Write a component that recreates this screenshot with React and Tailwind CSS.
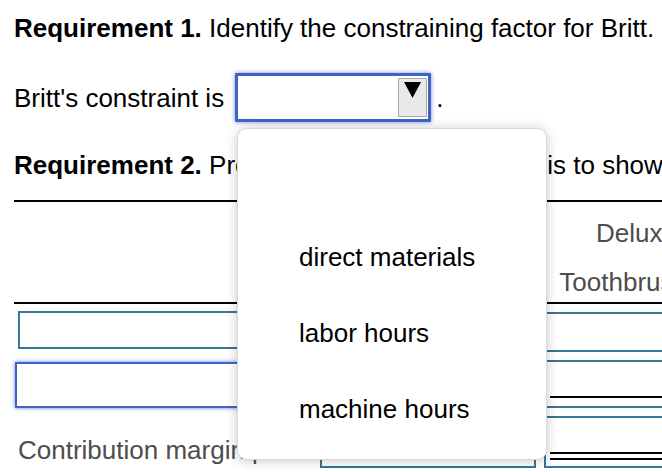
import React from 'react'

const teal = 'border-[#37779a]'

function SelectBox() {
  return (
    <div className="ml-[11px] flex h-[49px] w-[196px] items-center justify-end rounded-[1px] border-[3px] border-[#3f62c6] bg-white pr-[1px] shadow-[0_0_4px_rgba(66,98,210,0.75)]">
      <div className="flex h-[39px] w-[29px] justify-center border border-[#a9a9a9] bg-[#e9e9e9] pt-[3px]">
        <svg width="17" height="16" viewBox="0 0 17 16">
          <polygon points="0,0 17,0 8.5,16" fill="#000" />
        </svg>
      </div>
    </div>
  )
}

function Dropdown() {
  const options = ['', 'direct materials', 'labor hours', 'machine hours']
  return (
    <div className="absolute left-[237px] top-[128px] h-[332px] w-[310px] rounded-[10px] border border-[#d9d9d9] bg-white pt-[14px] shadow-[0_1px_12px_rgba(0,0,0,0.22)]">
      {options.map((o, i) => (
        <div key={i} className="flex h-[76px] items-center pl-[61px] text-[26px] leading-[30px] text-black">
          {o}
        </div>
      ))}
    </div>
  )
}

export default function App() {
  return (
    <div className="relative h-[472px] w-[662px] overflow-hidden bg-white font-['Liberation_Sans',Arial,sans-serif] text-[26px] leading-[30px] text-black">
      <div className="pl-[14px] pt-[13px]">
        {/* Requirement 1 */}
        <p className="whitespace-nowrap">
          <span className="font-bold">Requirement 1.</span> Identify the constraining factor for Britt.
        </p>

        <div className="mt-[30px] flex items-center whitespace-nowrap">
          <span>Britt's constraint is</span>
          <SelectBox />
          <span className="ml-[5px]">.</span>
        </div>

        {/* Requirement 2 */}
        <p className="mt-[28px] whitespace-nowrap">
          <span className="font-bold">Requirement 2.</span> Prepare a product line analysis to show which product to emphasize.
        </p>

        <div className="mt-[20px] w-[700px] border-t-2 border-black" />

        {/* table */}
        <div className="flex w-[700px]">
          {/* labels */}
          <div className="w-[298px] shrink-0">
            <div className="h-[100px]" />
            <div className="border-t-2 border-black pt-[7px]">
              <div className={`ml-[4px] h-[38px] w-[290px] border-2 ${teal}`} />
              <div className="mt-[13px] ml-[1px] h-[46px] w-[293px] border-2 border-[#4063c8] shadow-[0_0_4px_rgba(66,98,210,0.8)]" />
              <p className="mt-[27px] ml-[4px] whitespace-nowrap text-[#4d4d4d]">Contribution margin per machine hour</p>
            </div>
          </div>

          {/* Standard */}
          <div className="w-[231px] shrink-0">
            <div className="flex h-[100px] flex-col items-end pt-[7px] text-[#4d4d4d]">
              <span className="h-[49px] leading-[49px]">Standard</span>
              <span className="h-[44px] leading-[49px]">Toothbrush</span>
            </div>
            <div className="border-t-2 border-black pt-[8px]">
              <div className={`ml-[8px] h-[40px] w-[216px] border-2 ${teal}`} />
              <div className={`mt-[8px] ml-[8px] h-[48px] w-[216px] border-2 ${teal}`} />
              <div className={`mt-[8px] ml-[8px] h-[52px] w-[216px] border-2 ${teal}`} />
            </div>
          </div>

          {/* Deluxe */}
          <div className="w-[148px] shrink-0">
            <div className="flex h-[100px] flex-col items-end pt-[7px] pr-[3px] text-[#4d4d4d]">
              <span className="mr-[11px] h-[49px] leading-[49px]">Deluxe</span>
              <span className="h-[44px] leading-[49px]">Toothbrush</span>
            </div>
            <div className="border-t-2 border-black pt-[8px] pl-[4px]">
              <div className={`h-[40px] border-y-2 ${teal}`} />
              <div className="h-[8px]" />
              <div className={`h-[36px] border-t-2 ${teal}`} />
              <div className="ml-[3px] h-[10px] border-t-2 border-black" />
              <div className={`h-[10px] border-t-2 ${teal}`} />
              <div className={`-ml-[3px] border-l-2 pl-[1px] ${teal}`}>
                <div className={`h-[36px] border-t-2 ${teal}`} />
                <div className="ml-[3px] h-[6px] border-t-2 border-black" />
                <div className="ml-[3px] h-[8px] border-t-2 border-black" />
                <div className={`-ml-[1px] h-[2px] border-t-2 ${teal}`} />
              </div>
            </div>
          </div>
        </div>
      </div>

      <Dropdown />
    </div>
  )
}
